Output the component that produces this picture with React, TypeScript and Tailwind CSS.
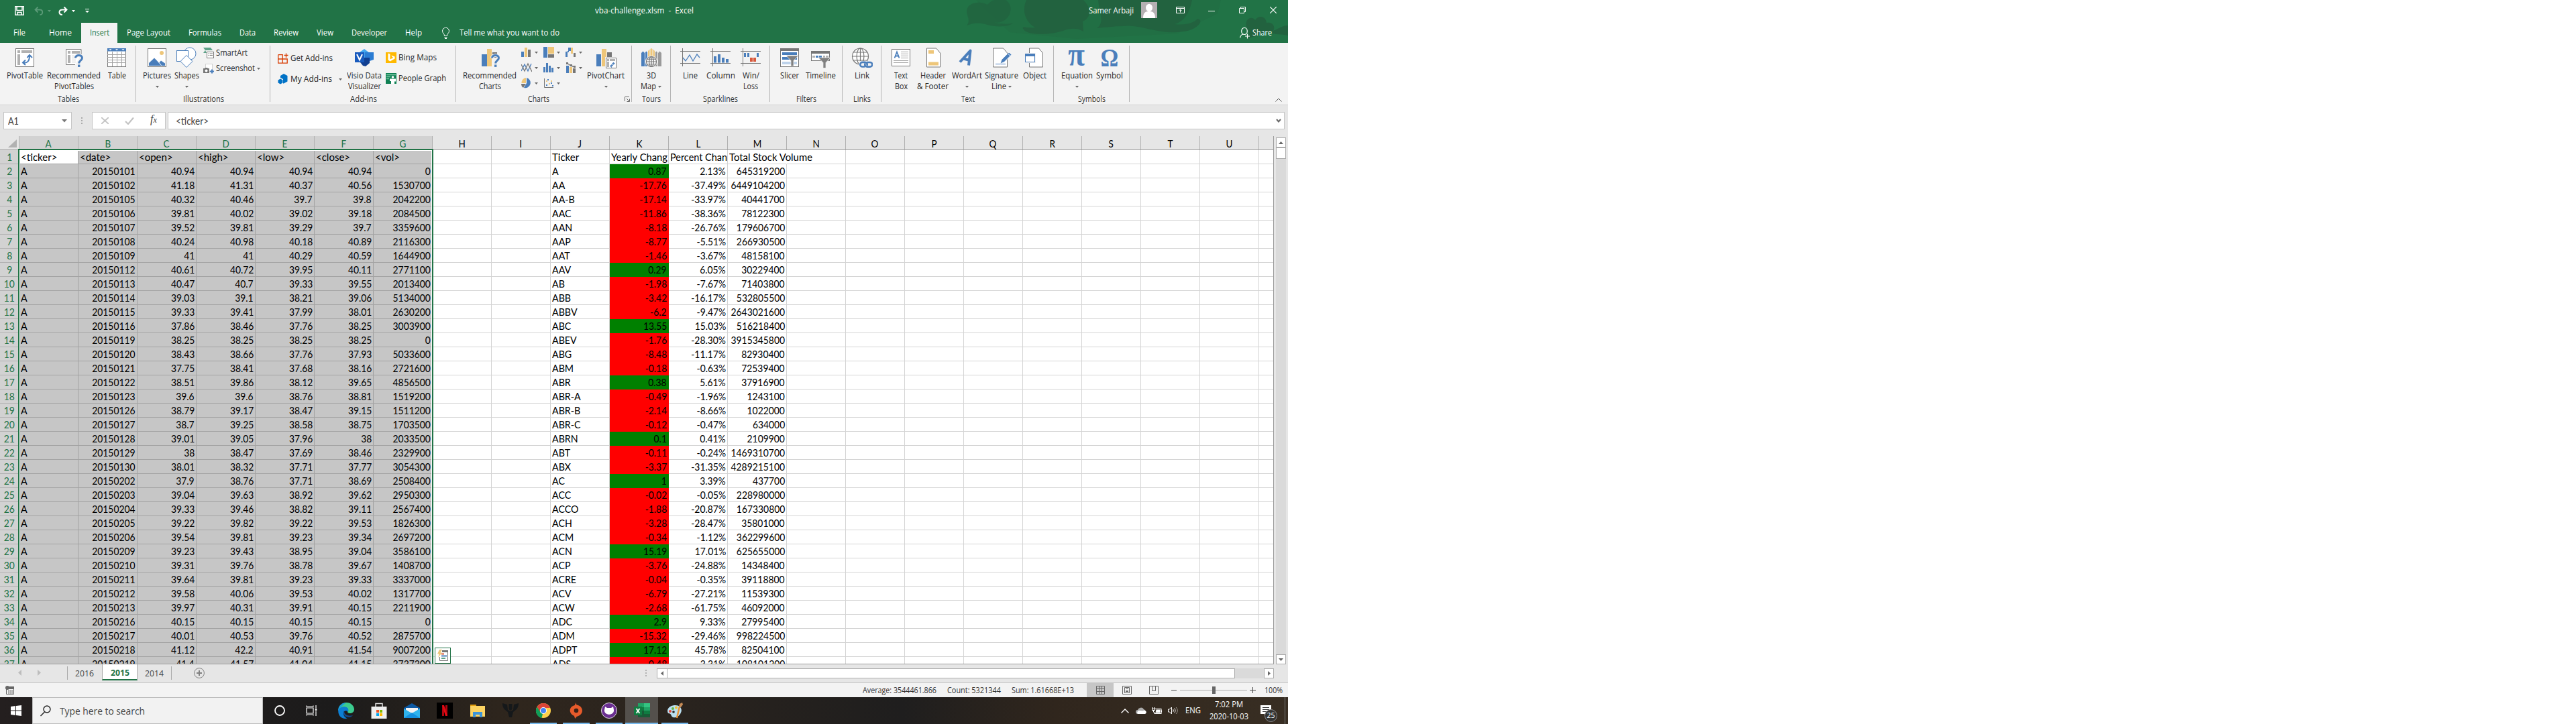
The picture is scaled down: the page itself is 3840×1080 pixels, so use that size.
import React, { useLayoutEffect, useRef } from 'react';

const BLUE = '#4a7ebb';
const GOLD = '#eec679';
const GREY = '#767676';

/* Text whose natural width is condensed or widened to fill the width of its box. */
function T({ className = '', children }: { className?: string; children: React.ReactNode }) {
  const outer = useRef<HTMLSpanElement>(null);
  const inner = useRef<HTMLSpanElement>(null);
  useLayoutEffect(() => {
    const fit = () => {
      const o = outer.current;
      const i = inner.current;
      if (!o || !i) return;
      i.style.transform = 'none';
      const w = i.getBoundingClientRect().width;
      if (w > 0) i.style.transform = `scaleX(${o.clientWidth / w})`;
    };
    fit();
    document.fonts?.ready.then(fit);
  }, []);
  return (
    <span ref={outer} className={`block shrink-0 whitespace-pre ${className}`}>
      <span ref={inner} className="inline-block origin-left">
        {children}
      </span>
    </span>
  );
}

function Down({ className = '' }: { className?: string }) {
  return (
    <svg className={`block shrink-0 ${className}`} width="5" height="3" viewBox="0 0 5 3">
      <path d="M0 0h5L2.5 3z" fill="currentColor" />
    </svg>
  );
}

function Svg({ size = 32, children }: { size?: number; children: React.ReactNode }) {
  return (
    <svg className="block shrink-0" width={size} height={size} viewBox={`0 0 ${size} ${size}`} fill="none">
      {children}
    </svg>
  );
}

/* ---------- large ribbon icons, 32 x 32 ---------- */

const PivotTableIcon = () => (
  <Svg>
    <rect x="2.5" y="2.5" width="27" height="27" fill="#fff" stroke={GREY} />
    <path d="M5 5h4v4H5zM11 5h16v4H11zM5 11h4v16H5z" fill="#b1b1b1" />
    <path d="M14 23.5c5 1 9-2 9-10M17 19.5l-4 4 4 3.5M19.5 16l3.5-4 4 4" stroke={BLUE} strokeWidth="2" />
  </Svg>
);

const Question = ({ x = 0, y = 0 }: { x?: number; y?: number }) => (
  <g transform={`translate(${x} ${y})`}>
    <path d="M1.5 6C1.5 0.500 11.500 0.500 11.500 6c0 3.500-4.500 4-4.500 8" stroke="#f3f3f3" strokeWidth="5" />
    <path d="M1.500 6C1.500 0.500 11.500 0.500 11.500 6c0 3.500-4.800 4-4.800 8" stroke={BLUE} strokeWidth="3" />
    <rect x="5" y="16" width="3.400" height="3.400" fill={BLUE} />
  </g>
);

const RecPivotIcon = () => (
  <Svg>
    <path d="M27 11V3.500H4.500v23H18" fill="#fff" stroke={GREY} />
    <path d="M7 6h4v4H7zM13 6h12v4H13zM7 12h4v12H7z" fill="#b1b1b1" />
    <path d="M13 13.500h8M13 16.500h6M13 19.500h6M13 22.500h6" stroke="#c8c8c8" />
    <Question x={17} y={10.500} />
  </Svg>
);

const TableIcon = () => (
  <Svg>
    <rect x="2.500" y="2.500" width="27" height="27" fill="#fff" stroke={GREY} />
    <rect x="2" y="2" width="28" height="4.500" fill={BLUE} />
    <path d="M4.500 3.300h4l-2 2zM14 3.300h4l-2 2zM23.500 3.300h4l-2 2z" fill="#fff" />
    <path d="M2 11.500h28M2 15.500h28M2 19.500h28M2 23.500h28M9.500 7v22M16.500 7v22M23.500 7v22" stroke="#a3a3a3" />
  </Svg>
);

const PicturesIcon = () => (
  <Svg>
    <rect x="2.500" y="2.500" width="27" height="27" fill="#fff" stroke={GREY} />
    <circle cx="23" cy="9" r="3" fill={GOLD} />
    <path d="M4 28v-4l8-7.500 7 7 3-3 6 4v3.500z" fill={BLUE} />
    <path d="M17 21l5.500 6.500" stroke="#fff" />
  </Svg>
);

const ShapesIcon = () => (
  <Svg>
    <circle cx="21" cy="10" r="9" fill="#fff" stroke={BLUE} />
    <rect x="1.500" y="5.500" width="17" height="16" fill="#fff" stroke={BLUE} />
    <path d="M16 12.500l9 9-9 9-9-9z" fill="#fff" stroke={BLUE} />
  </Svg>
);

const VisioIcon = () => (
  <Svg>
    <path d="M9 8l7-5 8 6v8H9z" fill="#41a5ee" />
    <path d="M17 8h13v11l-6 2-7-4z" fill="#2b7cd3" />
    <path d="M10 16h14v8l-6 5-4-1-4-5z" fill="#103f91" />
    <rect x="2" y="8" width="14" height="15" fill="#185abd" />
    <path d="M5 11l4 8.500 4-8.500" stroke="#fff" strokeWidth="2" />
  </Svg>
);

const RecChartsIcon = () => (
  <Svg>
    <rect x="4" y="11" width="8" height="18" fill={BLUE} />
    <rect x="12" y="3" width="7" height="26" fill={GOLD} />
    <rect x="20" y="8" width="7" height="8" fill={GREY} />
    <Question x={18} y={10.500} />
  </Svg>
);

const PivotChartIcon = () => (
  <Svg>
    <rect x="2" y="11" width="7" height="18" fill={BLUE} />
    <rect x="10" y="3" width="7" height="26" fill={GOLD} />
    <rect x="18" y="8" width="7" height="8" fill={GREY} />
    <rect x="15" y="15" width="17" height="17" fill="#f3f3f3" />
    <rect x="16.500" y="16.500" width="15" height="15" fill="#fff" stroke={GREY} />
    <path d="M18 18h3v3h-3zM22 18h8v3h-8zM18 22h3v8h-3z" fill="#b1b1b1" />
    <path d="M23 28.500c3 0 4.500-1 4.500-4.500M25 26.500l-2 2 2 2M25.500 25.500l2-2 2 2" stroke={BLUE} strokeWidth="1.200" />
  </Svg>
);

const Globe = ({ cx, cy, r }: { cx: number; cy: number; r: number }) => (
  <g stroke={GREY} strokeWidth="1.200">
    <circle cx={cx} cy={cy} r={r} fill="#fff" />
    <ellipse cx={cx} cy={cy} rx={r * 0.45} ry={r} />
    <path d={`M${cx - r} ${cy}h${2 * r}M${cx} ${cy - r}v${2 * r}M${cx - r * 0.85} ${cy - r * 0.5}h${r * 1.7}M${cx - r * 0.85} ${cy + r * 0.5}h${r * 1.7}`} />
  </g>
);

const MapIcon = () => (
  <Svg>
    <path d="M1 9l2.500-2.500L6 9v20H1zM7 8l1.500-1.500L10 8v21H7z" fill={BLUE} />
    <path d="M11 6l2.500-2.500v20H11zM14.500 3L16 2l1.500 1v20h-3zM18.500 3.500L21 6v17h-2.500z" fill={GOLD} />
    <path d="M22 8l1.500-1.500L25 8v21h-3zM26 9l2.500-2.500L31 9v20h-5z" fill="#9a9a9a" />
    <circle cx="16" cy="22" r="9" fill="#f3f3f3" />
    <Globe cx={16} cy={22} r={7.500} />
  </Svg>
);

const Axes = () => <path d="M1 6.500h30M1 24.500h30M4.500 2v27" stroke={GREY} />;

const LineIcon = () => (
  <Svg>
    <path d="M5 16l4 5 6-9 5 9 6-10 4 5" stroke={BLUE} strokeWidth="1.300" />
    <Axes />
  </Svg>
);

const ColumnIcon = () => (
  <Svg>
    <path d="M6 14h4v9.500H6zM12 11h4v12.500h-4zM18 16h4v7.500h-4zM24 18h4v5.500h-4z" fill={BLUE} />
    <Axes />
  </Svg>
);

const WinLossIcon = () => (
  <Svg>
    <path d="M6 9h3v6H6zM11 9h3v6h-3zM25 9h3v6h-3z" fill={BLUE} />
    <path d="M15 16h4v6h-4zM20 16h4v6h-4z" fill="#d8593c" />
    <Axes />
  </Svg>
);

const Funnel = ({ x = 0, y = 0 }: { x?: number; y?: number }) => (
  <path transform={`translate(${x} ${y})`} d="M0 0h18l-7 7.500v8H7v-8z" fill="#808080" stroke="#f3f3f3" strokeWidth=".7" />
);

const SlicerIcon = () => (
  <Svg>
    <rect x="2.500" y="2.500" width="27" height="27" fill="#fff" stroke={GREY} />
    <rect x="2" y="2" width="28" height="4" fill={GREY} />
    <path d="M5 8h22v4H5zM5 15h22v4H5z" fill={BLUE} />
    <path d="M5 22h22v4H5z" fill="#bdd2ea" />
    <Funnel x={11} y={13} />
  </Svg>
);

const TimelineIcon = () => (
  <Svg>
    <rect x="2.500" y="7.500" width="27" height="13" fill="#fff" stroke={GREY} />
    <rect x="2" y="6" width="28" height="4" fill={GREY} />
    <path d="M4 13h4v3H4zM20 13h3v3h-3zM24 13h4v3h-4z" fill="#b1b1b1" />
    <path d="M9 13h4v3H9zM14 13h4v3h-4z" fill={BLUE} />
    <Funnel x={13} y={16} />
  </Svg>
);

const LinkIcon = () => (
  <Svg>
    <Globe cx={13.500} cy={14} r={12} />
    <rect x="11" y="21" width="21" height="11" fill="#f3f3f3" />
    <path
      d="M20 29.500h-3.500a3.300 3.300 0 010-6.600h4c3 0 4 3 2.500 5M23 23h5a3.300 3.300 0 010 6.600h-4.500c-3 0-4-3-2.500-5"
      stroke={BLUE}
      strokeWidth="2.600"
    />
  </Svg>
);

const TextBoxIcon = () => (
  <Svg>
    <rect x="2.500" y="3.500" width="27" height="25" fill="#fff" stroke={GREY} />
    <path d="M16 7.500h11M16 10.500h11M16 13.500h11M16 16.500h11M5 20.500h22M5 23.500h22" stroke="#a3a3a3" />
    <path d="M6.500 16.500L10 7.500l3.500 9M8 13.500h4" stroke={BLUE} strokeWidth="1.800" />
  </Svg>
);

const Page = ({ x, w = 20 }: { x: number; w?: number }) => (
  <g transform={`translate(${x} 1.500)`}>
    <path d={`M.5.5h${w - 7}l6 7v21H.5z`} fill="#fff" stroke={GREY} />
    <path d={`M${w - 7}.5v7h6.500`} stroke={GREY} />
  </g>
);

const HeaderIcon = () => (
  <Svg>
    <Page x={6} w={21} />
    <path d="M9 5h8v5H9zM9 22.500h15v5H9z" fill={GOLD} />
  </Svg>
);

const WordArtIcon = () => (
  <Svg>
    <path d="M6 22.500L21.500 5.500l-2.500 22M11.500 17.500l9 2.500" stroke={BLUE} strokeWidth="4" strokeLinejoin="round" />
  </Svg>
);

const SignatureIcon = () => (
  <Svg>
    <Page x={3} w={22} />
    <path d="M7 25.500h15" stroke={BLUE} />
    <path d="M14 25l2-6L27 8l4 3.500L20 22.500z" fill={BLUE} stroke="#fff" strokeWidth=".8" />
    <path d="M25.500 10l3.500 3.500" stroke="#fff" />
  </Svg>
);

const ObjectIcon = () => (
  <Svg>
    <Page x={8} w={21} />
    <rect x="1" y="9" width="17" height="15" fill="#f3f3f3" />
    <rect x="2.500" y="10.500" width="14" height="12" fill="#fff" stroke={BLUE} />
    <rect x="2" y="10" width="15" height="4" fill={BLUE} />
  </Svg>
);

const GlyphIcon = ({ className, children }: { className: string; children: string }) => (
  <span className="flex h-8 w-8 shrink-0 items-center justify-center font-['Liberation_Serif'] font-bold text-[#4a7ebb]">
    <span className={`block shrink-0 leading-none ${className}`}>{children}</span>
  </span>
);

/* ---------- small ribbon icons, 16 x 16 ---------- */

const SmartArtIcon = () => (
  <Svg size={16}>
    <path d="M0 0h11l3 4H3l2 4H0l3-4z" fill="#5fa289" />
    <rect x="5.500" y="6.500" width="10" height="9" fill="#fff" stroke={GREY} />
    <path d="M7 9h1M7 11.500h1M9.500 9h4.500M9.500 11.500h4.500" stroke={GREY} />
  </Svg>
);
const ScreenshotIcon = () => (
  <Svg size={16}>
    <rect x="3.500" y="1.500" width="10" height="11" fill="#fff" stroke="#aaa" strokeDasharray="1 1" />
    <path d="M0 8h2l1-1h3l1 1h2v7H0z" fill={GREY} />
    <circle cx="4.500" cy="11.500" r="2" fill="#fff" />
    <path d="M13 9.500v6M10 12.500h6" stroke={BLUE} strokeWidth="2" />
  </Svg>
);
const GetAddinsIcon = () => (
  <Svg size={16}>
    <path d="M.7 2.700h6.500v12.500M.7 2.700v12.500h13.500V9H.7M12.500.5v6.500M9.500 3.500h6" stroke="#d83b01" strokeWidth="1.300" />
  </Svg>
);
const MyAddinsIcon = () => (
  <Svg size={16}>
    <path d="M9 0l5.500 3v8.500L9 14.500H8V8L4 6V3z" fill="#0072c6" />
    <path d="M4 7.500l3.500 2v4L4 15.500l-3.500-2v-4z" fill="#0072c6" />
  </Svg>
);
const BingIcon = () => (
  <Svg size={16}>
    <rect width="16" height="16" fill="#ffb900" />
    <path d="M3.500 1.500l3 1v8l5-2.500-2-1-1-2.500 5 2v3l-7 4-3-2z" fill="#fff" />
  </Svg>
);
const PeopleIcon = () => (
  <Svg size={16}>
    <rect width="16" height="16" fill="#0f8053" />
    <path d="M1 2.500h14M1 5.500h6M1 8.500h4" stroke="#7dc7a6" strokeWidth="1.500" />
    <circle cx="10.500" cy="6" r="1.800" fill="#fff" />
    <path d="M6 8.500h9v4h-2V16H8v-4H6z" fill="#fff" />
  </Svg>
);

const chartIcons: React.ReactNode[] = [
  <g key="0"><path d="M0 7h4v8H0z" fill={BLUE} /><path d="M5 1h4v14H5z" fill={GOLD} /><path d="M10 4h4v11h-4z" fill={GREY} /></g>,
  <g key="1"><path d="M0 0h6v16H0z" fill={BLUE} /><path d="M7 0h9v10H7z" fill={GOLD} /><path d="M7 11h9v5H7z" fill={GREY} /></g>,
  <g key="2"><path d="M0 7h3v8H0zM4 1h4v5H4zM3 6h2v2H3z" fill={BLUE} /><path d="M8 1h3v9H8z" fill={GOLD} /><path d="M12 9h3v6h-3z" fill={GREY} /></g>,
  <g key="3"><path d="M0 13L5 3l5 10 5-11" stroke={BLUE} strokeWidth="1.300" /><path d="M0 3l5 10 5-11 6 12" stroke={GREY} strokeWidth="1.300" /></g>,
  <path key="4" d="M0 7h3v8H0zM4 1h3v14H4zM8 5h3v10H8zM12 8h3v7h-3z" fill={BLUE} />,
  <g key="5"><path d="M1 5h4v11H1z" fill={BLUE} /><path d="M6 7h4v9H6z" fill={GOLD} /><path d="M11 9h4v7h-4z" fill={GREY} /><path d="M2 1l6 4 6 2" stroke={GREY} strokeWidth="1.400" /><path d="M1 0h3v3H1zM7 3h3v3H7zM12 5h3v3h-3z" fill={GREY} /></g>,
  <g key="6"><path d="M7 8V0a7.500 7.500 0 00-6.500 8z" fill={GOLD} /><path d="M0 9h7l-4 6a7 7 0 01-3-6z" fill={GREY} /><path d="M8 0a7.500 7.500 0 11-4 15l4-7z" fill={BLUE} /></g>,
  <g key="7"><path d="M1.500 1v13.500H15" stroke={GREY} /><path d="M4 4h2v2H4zM8 8h2v2H8zM11 4h2v2h-2z" fill={GOLD} /><path d="M6 2h2v2H6zM11 7h2v2h-2zM13 11h2v2h-2zM4 10h2v2H4z" fill={BLUE} /></g>,
];

/* ---------- ribbon ---------- */

type BigProps = {
  className: string;
  icon: React.ReactNode;
  l1: string;
  w1: string;
  l2?: string;
  w2?: string;
  arrow?: boolean;
};

function Big({ className, icon, l1, w1, l2, w2 = '', arrow }: BigProps) {
  return (
    <div className={`flex shrink-0 flex-col items-center pt-1.5 ${className}`}>
      {icon}
      <div className="mt-[3px] flex h-4 items-center justify-center">
        <T className={w1}>{l1}</T>
      </div>
      <div className="flex h-4 items-center justify-center gap-[3px]">
        {l2 && <T className={w2}>{l2}</T>}
        {arrow && <Down className="text-[#666]" />}
      </div>
    </div>
  );
}

function Group({ className, label, lw, launcher, children }: { className: string; label: string; lw: string; launcher?: boolean; children: React.ReactNode }) {
  return (
    <div className={`relative flex shrink-0 flex-col ${className}`}>
      <div className="flex h-[76px]">{children}</div>
      <div className={`flex h-4 items-center justify-center text-[#333] ${launcher ? 'pr-4' : ''}`}>
        <T className={lw}>{label}</T>
      </div>
      {launcher && (
        <svg className="absolute right-[3px] bottom-1" width="8" height="8" viewBox="0 0 8 8" fill="none" stroke="#666">
          <path d="M.5 7V.5H7M3 3l4 4M7.500 3.500v4h-4" />
        </svg>
      )}
      <div className="absolute top-1 right-0 h-[84px] w-px bg-[#b5b5b5]" />
    </div>
  );
}

function Small({ icon, text, w, arrow, className = '' }: { icon: React.ReactNode; text: string; w: string; arrow?: string; className?: string }) {
  return (
    <div className={`flex h-4 items-center ${className}`}>
      {icon}
      <T className={`ml-[3px] ${w}`}>{text}</T>
      {arrow && <Down className={`text-[#666] ${arrow}`} />}
    </div>
  );
}

function Ribbon() {
  return (
    <div className="flex h-[93px] border-b border-[#d2d2d2] bg-[#f3f3f3] text-xs leading-4 text-[#262626]">
      <Group className="w-[203px]" label="Tables" lw="w-[32px]">
        <Big className="ml-1.5 w-[62px]" icon={<PivotTableIcon />} l1="PivotTable" w1="w-[54px]" />
        <Big className="w-[84px]" icon={<RecPivotIcon />} l1="Recommended" w1="w-[80px]" l2="PivotTables" w2="w-[59px]" />
        <Big className="w-[44px]" icon={<TableIcon />} l1="Table" w1="w-[27px]" />
      </Group>
      <Group className="w-[200px]" label="Illustrations" lw="w-[61px]">
        <Big className="ml-[9px] w-[44px]" icon={<PicturesIcon />} l1="Pictures" w1="w-[42px]" arrow />
        <Big className="w-[44px]" icon={<ShapesIcon />} l1="Shapes" w1="w-[37px]" arrow />
        <div className="ml-[3px] flex flex-col gap-[7px] pt-[7px]">
          <Small icon={<SmartArtIcon />} text="SmartArt" w="w-[47px]" />
          <Small icon={<ScreenshotIcon />} text="Screenshot" w="w-[58px]" arrow="ml-[3px]" />
        </div>
      </Group>
      <Group className="w-[277px]" label="Add-ins" lw="w-[40px]">
        <div className="ml-[11px] flex w-[101px] flex-col gap-[15px] pt-[15px]">
          <Small icon={<GetAddinsIcon />} text="Get Add-ins" w="w-[63px]" />
          <Small icon={<MyAddinsIcon />} text="My Add-ins" w="w-[62px]" arrow="ml-[10px]" />
        </div>
        <Big className="w-[56px]" icon={<VisioIcon />} l1="Visio Data" w1="w-[52px]" l2="Visualizer" w2="w-[49px]" />
        <div className="ml-1 flex flex-col gap-[15px] pt-3.5">
          <Small icon={<BingIcon />} text="Bing Maps" w="w-[57px]" />
          <Small icon={<PeopleIcon />} text="People Graph" w="w-[71px]" />
        </div>
      </Group>
      <Group className="w-[262px]" label="Charts" lw="w-[32px]" launcher>
        <Big className="ml-2 w-[84px]" icon={<RecChartsIcon />} l1="Recommended" w1="w-[80px]" l2="Charts" w2="w-[33px]" />
        <div className="ml-[5px] grid h-fit w-[99px] grid-cols-3 gap-y-[7px] pt-1.5">
          {chartIcons.map((ic, i) => (
            <div key={i} className="flex items-center gap-1">
              <Svg size={16}>{ic}</Svg>
              <Down className="text-[#666]" />
            </div>
          ))}
        </div>
        <Big className="-ml-px w-[56px]" icon={<PivotChartIcon />} l1="PivotChart" w1="w-[56px]" arrow />
      </Group>
      <Group className="w-[58px]" label="Tours" lw="w-[28px]">
        <Big className="w-[57px]" icon={<MapIcon />} l1="3D" w1="w-[14px]" l2="Map" w2="w-[23px]" arrow />
      </Group>
      <Group className="w-[148px]" label="Sparklines" lw="w-[52px]">
        <Big className="ml-[7px] w-[44px]" icon={<LineIcon />} l1="Line" w1="w-[22px]" />
        <Big className="w-[46px]" icon={<ColumnIcon />} l1="Column" w1="w-[43px]" />
        <Big className="w-[44px]" icon={<WinLossIcon />} l1="Win/" w1="w-[25px]" l2="Loss" w2="w-[22px]" />
      </Group>
      <Group className="w-[108px]" label="Filters" lw="w-[30px]">
        <Big className="ml-[6px] w-[46px]" icon={<SlicerIcon />} l1="Slicer" w1="w-[28px]" />
        <Big className="w-[46px]" icon={<TimelineIcon />} l1="Timeline" w1="w-[45px]" />
      </Group>
      <Group className="w-[58px]" label="Links" lw="w-[26px]">
        <Big className="w-[58px]" icon={<LinkIcon />} l1="Link" w1="w-[22px]" />
      </Group>
      <Group className="w-[257px]" label="Text" lw="w-[20px]">
        <Big className="ml-[7px] w-[44px]" icon={<TextBoxIcon />} l1="Text" w1="w-[20px]" l2="Box" w2="w-[19px]" />
        <Big className="w-[51px]" icon={<HeaderIcon />} l1="Header" w1="w-[38px]" l2="& Footer" w2="w-[47px]" />
        <Big className="w-[50px]" icon={<WordArtIcon />} l1="WordArt" w1="w-[45px]" arrow />
        <Big className="w-[54px]" icon={<SignatureIcon />} l1="Signature" w1="w-[50px]" l2="Line" w2="w-[22px]" arrow />
        <Big className="w-[44px]" icon={<ObjectIcon />} l1="Object" w1="w-[35px]" />
      </Group>
      <Group className="w-[113px]" label="Symbols" lw="w-[41px]">
        <Big className="ml-[9px] w-[50px]" icon={<GlyphIcon className="-translate-y-[5px] scale-x-90 text-[50px]">π</GlyphIcon>} l1="Equation" w1="w-[47px]" arrow />
        <Big className="w-[47px]" icon={<GlyphIcon className="scale-x-90 text-[37px]">Ω</GlyphIcon>} l1="Symbol" w1="w-[40px]" />
      </Group>
      <div className="flex flex-1 items-end justify-end pr-[9px] pb-1">
        <svg width="10" height="6" viewBox="0 0 10 6" fill="none" stroke="#555">
          <path d="M.5 5.500L5 1l4.500 4.500" />
        </svg>
      </div>
    </div>
  );
}

/* ---------- title bar and tabs ---------- */

const tabs = [
  { t: 'File', c: 'ml-[20px] w-[18px]' },
  { t: 'Home', c: 'ml-[35px] w-[34px]' },
  { t: 'Insert', c: 'w-[29px]', active: true },
  { t: 'Page Layout', c: 'ml-[14px] w-[65px]' },
  { t: 'Formulas', c: 'ml-[27px] w-[49px]' },
  { t: 'Data', c: 'ml-[27px] w-[24px]' },
  { t: 'Review', c: 'ml-[27px] w-[37px]' },
  { t: 'View', c: 'ml-[27px] w-[25px]' },
  { t: 'Developer', c: 'ml-[27px] w-[53px]' },
  { t: 'Help', c: 'ml-[27px] w-[25px]' },
];

function Header() {
  return (
    <div className="relative h-16 bg-[#217346] text-xs leading-4 text-white">
      <svg className="absolute top-0 right-0" width="500" height="64" viewBox="0 0 500 64" fill="#22623f">
        <path d="M35 0H400l-5 20-60 30-150 8-100-10z" opacity=".25" />
        <path d="M21 18C20 4 40 0 52 7c6-6 8-7 12-7h15c12 8 8 22 1 28-5 5-14 7-20 5 12 3 24 4 30 1-4 6-25 7-38 3-10-3-18-4-31 1 6-7 1-13 0-20z" opacity=".75" />
        <path d="M110 0h85c12 12 12 26-1 32l1 15c-10-6-17-4-25-3-25 10-60 8-64 0-3-3 0-5 4-3 5 0 9 1 13 0C108 32 103 16 110 0z" />
        <path d="M217 0h140c-4 20-12 32-26 36 14 2 28-1 34-8 12 2-2 18-22 19-32 6-66-12-88-8-15 0-28 2-40 3 12-8 4-22 2-42z" />
        <path d="M438 40c-3-12 8-17 13-10 5-8 16-6 17 4 12-2 14 10 8 14 0 4 10 2 24 5v-15c-10 0-18 8-24 8l-38 12c6-6 3-12 0-18z" />
      </svg>
      <div className="relative flex h-8 items-center">
        <svg className="ml-[22px]" width="14" height="14" viewBox="0 0 14 14" fill="none" stroke="#fff" strokeWidth="1.500">
          <path d="M.8.800h12.400v12.400H.8zM3 1v5.500h8V1M4 13V9.500h6V13" />
        </svg>
        <svg className="ml-[15px] text-[#5b9a78]" width="14" height="13" viewBox="0 0 14 13" fill="none" stroke="currentColor" strokeWidth="1.800">
          <path d="M5.500.5L1.500 4.500l4 4M2 4.500h6.500c5 0 5 7.500 0 7.500" />
        </svg>
        <Down className="ml-[6px] text-[#5b9a78]" />
        <svg className="ml-[11px]" width="14" height="13" viewBox="0 0 14 13" fill="none" stroke="#fff" strokeWidth="2">
          <path d="M8.500.5l4 4-4 4M12 4.500H6c-6 0-6 7.500 0 7.500" />
        </svg>
        <Down className="ml-[6px]" />
        <svg className="ml-[15px]" width="6" height="6" viewBox="0 0 6 6">
          <path d="M0 0h6v1H0zM0 3h6L3 6z" fill="#fff" />
        </svg>
        <T className="ml-[754px] w-[147px]">{'vba-challenge.xlsm  -  Excel'}</T>
        <T className="ml-[589px] w-[67px]">Samer Arbaji</T>
        <svg className="-mt-0.5 ml-[11px]" width="24" height="24" viewBox="0 0 24 24">
          <rect width="24" height="24" fill="#b4b0b2" />
          <ellipse cx="12" cy="8.500" rx="5" ry="5.800" fill="#fff" />
          <path d="M3 24c0-9 4-10 9-10s9 1 9 10z" fill="#fff" />
        </svg>
        <svg className="-mt-0.5 ml-[28px]" width="13" height="10" viewBox="0 0 13 10" fill="none" stroke="#fff">
          <path d="M.5.500h12v9H.5zM1 2.500h11M6.500 8.500V4M4.500 6l2-2 2 2" />
        </svg>
        <div className="ml-[35px] h-px w-[10px] bg-white" />
        <svg className="-mt-0.5 ml-[36px]" width="10" height="10" viewBox="0 0 10 10" fill="none" stroke="#fff">
          <path d="M.5 2.500h7v7h-7zM2.500 2V.5h7v7H8" />
        </svg>
        <svg className="-mt-0.5 ml-[36px]" width="10" height="10" viewBox="0 0 10 10" fill="none" stroke="#fff" strokeWidth="1.200">
          <path d="M0 0l10 10M10 0L0 10" />
        </svg>
      </div>
      <div className="relative flex h-8 items-end">
        {tabs.map((tab) =>
          tab.active ? (
            <div key={tab.t} className="ml-[14px] flex h-[30px] w-[54px] items-center justify-center bg-[#f3f3f3] text-[#217346]">
              <T className={tab.c}>{tab.t}</T>
            </div>
          ) : (
            <div key={tab.t} className="flex h-[30px] items-center">
              <T className={tab.c}>{tab.t}</T>
            </div>
          ),
        )}
        <div className="flex h-[30px] items-center">
          <svg className="ml-[30px]" width="11" height="17" viewBox="0 0 11 17" fill="none" stroke="#fff">
            <path d="M3.500 12.500C3.500 9 .5 8.500.5 5.300a5 5 0 0110 0c0 3.200-3 3.700-3 7.200zM3.500 14.500h4M4 16.500h3" />
          </svg>
          <T className="ml-[15px] w-[149px]">Tell me what you want to do</T>
          <svg className="ml-[1014px]" width="15" height="17" viewBox="0 0 15 17" fill="none" stroke="#fff" strokeWidth="1.200">
            <ellipse cx="7" cy="5.500" rx="4.300" ry="5" />
            <path d="M.6 15.500c.5-3 2-5 4.400-5.500M11.500 9.500v7M8 13h7" />
          </svg>
          <T className="ml-1 w-[29px]">Share</T>
        </div>
      </div>
    </div>
  );
}

/* ---------- formula bar ---------- */

function FormulaBar() {
  return (
    <div className="flex h-[46px] items-start bg-[#e6e6e6] pt-[10px] pl-[5px] text-[#444]">
      <div className="flex h-[26px] w-[102px] items-center border border-[#c6c6c6] bg-white pl-1.5 font-['Lato'] text-[15px]">
        <T className="w-[16px]">A1</T>
        <svg className="ml-[64px]" width="8" height="5" viewBox="0 0 8 5">
          <path d="M0 0h8L4 4.500z" fill="#777" />
        </svg>
      </div>
      <div className="flex h-[26px] w-[30px] flex-col items-center justify-center gap-[2px]">
        <i className="block size-[2px] bg-[#aaa]" />
        <i className="block size-[2px] bg-[#aaa]" />
        <i className="block size-[2px] bg-[#aaa]" />
      </div>
      <div className="flex h-[26px] w-[110px] items-center border border-[#c6c6c6] bg-white">
        <svg className="ml-[13px]" width="11" height="10" viewBox="0 0 11 10" stroke="#c3c3c3" strokeWidth="1.800">
          <path d="M0 0l11 10M11 0L0 10" />
        </svg>
        <svg className="ml-[24px]" width="14" height="11" viewBox="0 0 14 11" fill="none" stroke="#c3c3c3" strokeWidth="2.200">
          <path d="M1 6l4 4 8-9.500" />
        </svg>
        <span className="-mt-1 ml-[24px] font-['Liberation_Serif'] text-[16px] leading-none text-[#444] italic">
          f<span className="text-[12px]">x</span>
        </span>
      </div>
      <div className="ml-[3px] flex h-[26px] w-[1665px] items-center justify-between border border-[#c6c6c6] bg-white pr-1 pl-[11px] font-['Lato'] text-[15px]">
        <T className="w-[49px]">&lt;ticker&gt;</T>
        <svg width="8" height="6" viewBox="0 0 8 6" fill="none" stroke="#666" strokeWidth="2">
          <path d="M1 1l3 3.500L7 1" />
        </svg>
      </div>
    </div>
  );
}

/* ---------- sheet ---------- */

const columns = 'ABCDEFGHIJKLMNOPQRSTU'.split('');

const sheet = `<ticker>|<date>|<open>|<high>|<low>|<close>|<vol>|Ticker|Yearly Chang|Percent Chan|Total Stock Volume
A|20150101|40.94|40.94|40.94|40.94|0|A|0.87|2.13%|645319200
A|20150102|41.18|41.31|40.37|40.56|1530700|AA|-17.76|-37.49%|6449104200
A|20150105|40.32|40.46|39.7|39.8|2042200|AA-B|-17.14|-33.97%|40441700
A|20150106|39.81|40.02|39.02|39.18|2084500|AAC|-11.86|-38.36%|78122300
A|20150107|39.52|39.81|39.29|39.7|3359600|AAN|-8.18|-26.76%|179606700
A|20150108|40.24|40.98|40.18|40.89|2116300|AAP|-8.77|-5.51%|266930500
A|20150109|41|41|40.29|40.59|1644900|AAT|-1.46|-3.67%|48158100
A|20150112|40.61|40.72|39.95|40.11|2771100|AAV|0.29|6.05%|30229400
A|20150113|40.47|40.7|39.33|39.55|2013400|AB|-1.98|-7.67%|71403800
A|20150114|39.03|39.1|38.21|39.06|5134000|ABB|-3.42|-16.17%|532805500
A|20150115|39.33|39.41|37.99|38.01|2630200|ABBV|-6.2|-9.47%|2643021600
A|20150116|37.86|38.46|37.76|38.25|3003900|ABC|13.55|15.03%|516218400
A|20150119|38.25|38.25|38.25|38.25|0|ABEV|-1.76|-28.30%|3915345800
A|20150120|38.43|38.66|37.76|37.93|5033600|ABG|-8.48|-11.17%|82930400
A|20150121|37.75|38.41|37.68|38.16|2721600|ABM|-0.18|-0.63%|72539400
A|20150122|38.51|39.86|38.12|39.65|4856500|ABR|0.38|5.61%|37916900
A|20150123|39.6|39.6|38.76|38.81|1519200|ABR-A|-0.49|-1.96%|1243100
A|20150126|38.79|39.17|38.47|39.15|1511200|ABR-B|-2.14|-8.66%|1022000
A|20150127|38.7|39.25|38.58|38.75|1703500|ABR-C|-0.12|-0.47%|634000
A|20150128|39.01|39.05|37.96|38|2033500|ABRN|0.1|0.41%|2109900
A|20150129|38|38.47|37.69|38.46|2329900|ABT|-0.11|-0.24%|1469310700
A|20150130|38.01|38.32|37.71|37.77|3054300|ABX|-3.37|-31.35%|4289215100
A|20150202|37.9|38.76|37.71|38.69|2508400|AC|1|3.39%|437700
A|20150203|39.04|39.63|38.92|39.62|2950300|ACC|-0.02|-0.05%|228980000
A|20150204|39.33|39.46|38.82|39.11|2567400|ACCO|-1.88|-20.87%|167330800
A|20150205|39.22|39.82|39.22|39.53|1826300|ACH|-3.28|-28.47%|35801000
A|20150206|39.54|39.81|39.23|39.34|2697200|ACM|-0.34|-1.12%|362299600
A|20150209|39.23|39.43|38.95|39.04|3586100|ACN|15.19|17.01%|625655000
A|20150210|39.31|39.76|38.78|39.67|1408700|ACP|-3.76|-24.88%|14348400
A|20150211|39.64|39.81|39.23|39.33|3337000|ACRE|-0.04|-0.35%|39118800
A|20150212|39.58|40.06|39.53|40.02|1317700|ACV|-6.79|-27.21%|11539300
A|20150213|39.97|40.31|39.91|40.15|2211900|ACW|-2.68|-61.75%|46092000
A|20150216|40.15|40.15|40.15|40.15|0|ADC|2.9|9.33%|27995400
A|20150217|40.01|40.53|39.76|40.52|2875700|ADM|-15.32|-29.46%|998224500
A|20150218|41.12|42.2|40.91|41.54|9007200|ADPT|17.12|45.78%|82504100
A|20150219|41.4|41.57|41.04|41.15|3737300|ADS|-0.48|-3.31%|108101200`
  .split('\n')
  .map((line) => {
    const c = line.split('|');
    return [...c.slice(0, 7), '', '', ...c.slice(7)];
  });

const isNumber = (r: number, c: number) => r > 0 && c !== 0 && c !== 9;

function cellClass(r: number, c: number, v: string) {
  const out = ['flex h-[21px] w-[88px] shrink-0 border-r border-b px-[2px] whitespace-nowrap'];
  if (c < 7) {
    out.push(r === 0 && c === 0 ? 'bg-white border-[#a3a3a3]' : 'bg-[#c6c6c6] border-[#a3a3a3]');
  } else if (c === 10 && r > 0) {
    out.push(v.startsWith('-') ? 'bg-[#ff0000] border-[#ff0000]' : 'bg-[#008000] border-[#008000]');
  } else if (r === 0 && c === 12) {
    out.push('border-b-[#d4d4d4] border-r-transparent');
  } else {
    out.push('border-[#d4d4d4]');
  }
  out.push(isNumber(r, c) ? 'justify-end' : 'justify-start');
  return out.join(' ');
}

function Cell({ r, c, v }: { r: number; c: number; v: string }) {
  let text: React.ReactNode = v;
  if (v && isNumber(r, c)) text = <span className="block shrink-0 origin-right scale-x-[0.925]">{v}</span>;
  else if (v && r > 0) text = <span className="block shrink-0 origin-left scale-x-[0.95]">{v}</span>;
  else if (c === 10) text = <T className="w-[84px]">{v}</T>;
  else if (c === 11) text = <T className="w-[85px]">{v}</T>;
  else if (c === 12) text = <T className="relative w-[124px]">{v}</T>;
  return <div className={cellClass(r, c, v)}>{text}</div>;
}

function Sheet() {
  return (
    <div className="flex h-[788px] bg-[#e6e6e6] font-['Lato'] text-[15px] leading-[21px] text-black">
      <div className="relative h-[788px] w-[1899px] overflow-hidden border-r border-b border-[#9b9b9b]">
        <div className="flex h-[21px] border-b border-[#9b9b9b]">
          <div className="flex w-[29px] items-end justify-end border-r border-[#b1b1b1] pr-[3px] pb-[3px]">
            <svg width="13" height="12" viewBox="0 0 13 12">
              <path d="M13 0v12H0z" fill="#b1b1b1" />
            </svg>
          </div>
          {columns.map((c, i) => (
            <div
              key={c}
              className={`w-[88px] shrink-0 border-r border-[#b1b1b1] text-center leading-[22px] ${i < 7 ? 'bg-[#d2d2d2] text-[#217346]' : ''}`}
            >
              <span className="inline-block scale-x-90">{c}</span>
            </div>
          ))}
        </div>
        {sheet.map((row, r) => (
          <div key={r} className="flex h-[21px] bg-white">
            <div className="h-[21px] w-[29px] shrink-0 border-r border-b border-[#b1b1b1] bg-[#d2d2d2] text-center text-[#217346]">
              <span className="inline-block scale-x-[0.925]">{r + 1}</span>
            </div>
            {columns.map((_, c) => (
              <Cell key={c} r={r} c={c} v={row[c] ?? ''} />
            ))}
            <div className="h-[21px] flex-1 border-b border-[#d4d4d4]" />
          </div>
        ))}
        <div className="absolute top-[19px] left-[27px] h-[900px] w-[619px] border-2 border-[#217346]" />
        <div className="absolute top-[21px] left-[29px] h-[900px] w-[615px] border border-white" />
        <div className="absolute top-[763px] left-[648px] flex h-[24px] w-[24px] items-center justify-center border border-[#217346] bg-white">
          <svg width="18" height="18" viewBox="0 0 18 18" fill="none">
            <path d="M4.500 11v5.500h12V2.500H8" stroke={GREY} />
            <path d="M8 1h9v3H8z" fill={GREY} />
            <path d="M7 6.500h4" stroke="#d8593c" strokeWidth="2" />
            <path d="M7 9.500h8" stroke={BLUE} strokeWidth="2" />
            <path d="M7 13h6" stroke="#5fa289" strokeWidth="2" />
            <path d="M4 0h4L5.500 4.500H8L2 12l1.500-5.500H1z" fill={GOLD} />
          </svg>
        </div>
      </div>
      <div className="ml-[3px] flex w-[15px] flex-col pt-[2px]">
        <div className="flex h-[15px] items-center justify-center border border-[#ababab] bg-white text-[#666]">
          <svg width="7" height="4" viewBox="0 0 7 4"><path d="M0 4h7L3.500 0z" fill="currentColor" /></svg>
        </div>
        <div className="h-[17px] border border-[#ababab] bg-white" />
        <div className="flex-1 bg-[#dadada]" />
        <div className="flex h-[15px] items-center justify-center border border-[#ababab] bg-white text-[#666]">
          <svg width="7" height="4" viewBox="0 0 7 4"><path d="M0 0h7L3.500 4z" fill="currentColor" /></svg>
        </div>
      </div>
    </div>
  );
}

function SheetTabs() {
  return (
    <div className="flex h-[28px] border-b border-[#c6c6c6] bg-[#e6e6e6] text-[13px] leading-[24px] text-[#444]">
      <svg className="mt-2 ml-[27px]" width="5" height="9" viewBox="0 0 5 9"><path d="M5 0v9L0 4.500z" fill="#bdbdbd" /></svg>
      <svg className="mt-2 ml-[24px]" width="5" height="9" viewBox="0 0 5 9"><path d="M0 0v9l5-4.500z" fill="#bdbdbd" /></svg>
      <div className="mt-[3px] ml-[39px] h-5 w-px bg-[#ababab]" />
      <T className="mt-px ml-[11px] w-[28px]">2016</T>
      <div className="ml-[12px] flex h-[24px] w-[53px] justify-center border-x border-b-2 border-x-[#ababab] border-b-[#217346] bg-white font-bold text-[#217346]">
        <T className="w-[28px]">2015</T>
      </div>
      <T className="mt-px ml-[11px] w-[28px]">2014</T>
      <div className="mt-[3px] ml-[11px] h-5 w-px bg-[#ababab]" />
      <svg className="mt-[5px] ml-[33px]" width="16" height="16" viewBox="0 0 16 16" fill="none" stroke="#808080">
        <circle cx="8" cy="8" r="7.400" />
        <path d="M8 4v8M4 8h8" strokeWidth="2" />
      </svg>
      <div className="mt-2 ml-[657px] flex flex-col gap-[2px]">
        <i className="block size-[2px] bg-[#b1b1b1]" />
        <i className="block size-[2px] bg-[#b1b1b1]" />
        <i className="block size-[2px] bg-[#b1b1b1]" />
      </div>
      <div className="ml-[15px] flex h-[15px] w-[920px] self-center bg-[#dadada]">
        <div className="flex w-[16px] items-center justify-center border border-[#ababab] bg-white">
          <svg width="4" height="7" viewBox="0 0 4 7"><path d="M4 0v7L0 3.500z" fill="#666" /></svg>
        </div>
        <div className="w-[846px] border border-l-0 border-[#ababab] bg-white" />
        <div className="ml-auto flex w-[15px] items-center justify-center border border-[#ababab] bg-white">
          <svg width="4" height="7" viewBox="0 0 4 7"><path d="M0 0v7l4-3.500z" fill="#666" /></svg>
        </div>
      </div>
    </div>
  );
}

function StatusBar() {
  return (
    <div className="flex h-[21px] items-center bg-[#f3f3f3] text-xs leading-4 text-[#333]">
      <svg className="ml-[8px]" width="13" height="13" viewBox="0 0 13 13">
        <path d="M5 1h8v4H5z" fill="#666" />
        <path d="M1.500 5v7.500h11V1" fill="none" stroke="#666" />
        <path d="M4 7h7M4 9h7M4 11h7" stroke="#666" strokeDasharray="2 .6" />
        <circle cx="3" cy="3" r="3" fill="#666" />
      </svg>
      <T className="ml-[1265px] w-[110px]">Average: 3544461.866</T>
      <T className="ml-[16px] w-[80px]">Count: 5321344</T>
      <T className="ml-[16px] w-[93px]">Sum: 1.61668E+13</T>
      <div className="ml-[19px] flex h-[21px] w-[40px] items-center justify-center bg-[#c6c6c6]">
        <svg width="13" height="13" viewBox="0 0 13 13" fill="none" stroke="#666">
          <path d="M.5.500h12v12H.5zM4.500 0v13M8.500 0v13M0 4.500h13M0 8.500h13" />
        </svg>
      </div>
      <svg className="ml-[13px]" width="14" height="13" viewBox="0 0 14 13" fill="none" stroke="#666">
        <path d="M.5.500h13v12H.5zM3.500 2.500h7v8h-7zM5 4.500h4M5 6.500h4M5 8.500h4" />
      </svg>
      <svg className="ml-[26px]" width="14" height="13" viewBox="0 0 14 13" fill="none" stroke="#666">
        <path d="M.5.500h13v12H.5zM4.500 0v7.500h5V0" />
      </svg>
      <div className="ml-[19px] h-px w-[8px] bg-[#444]" />
      <div className="ml-[5px] flex h-3 w-[100px] items-center">
        <div className="h-px w-12 bg-[#ababab]" />
        <div className="h-[11px] w-[5px] bg-[#666]" />
        <div className="h-px flex-1 bg-[#ababab]" />
      </div>
      <svg className="ml-[4px]" width="9" height="9" viewBox="0 0 9 9" stroke="#444"><path d="M4.500 0v9M0 4.500h9" /></svg>
      <T className="ml-[13px] w-[27px]">100%</T>
    </div>
  );
}

/* ---------- taskbar ---------- */

function App24({ open, active, children }: { open?: boolean; active?: boolean; children: React.ReactNode }) {
  return (
    <div className={`relative flex h-10 w-[49px] items-center justify-center ${active ? 'bg-[#54504c]' : ''}`}>
      <svg width="24" height="24" viewBox="0 0 24 24" fill="none">
        {children}
      </svg>
      {open && <div className={`absolute bottom-0 h-[2px] bg-[#76b9ed] ${active ? 'w-[49px]' : 'w-10'}`} />}
    </div>
  );
}

function Taskbar() {
  return (
    <div className="flex h-10 items-center bg-[linear-gradient(90deg,#241f1f_0%,#1c1b1b_26%,#2f261d_40%,#2b241e_50%,#1f1e1e_70%,#30261d_82%,#382e23_100%)] text-white">
      <svg className="ml-[16px]" width="16" height="16" viewBox="0 0 16 16" fill="#fff">
        <path d="M0 2l7-1v6.500H0zM8 .900L16 0v7.500H8zM0 8.500h7V15l-7-1zM8 8.500h8V16l-8-1z" />
      </svg>
      <div className="ml-[16px] flex h-10 w-[344px] items-center border border-[#bcbcbc] bg-[#f2f2f2] text-[15px] leading-5 text-[#444]">
        <svg className="ml-[11px]" width="16" height="17" viewBox="0 0 16 17" fill="none" stroke="#222" strokeWidth="1.400">
          <circle cx="10" cy="6" r="5" />
          <path d="M6.500 10L.5 16" />
        </svg>
        <T className="ml-[13px] w-[127px]">Type here to search</T>
      </div>
      <App24><circle cx="12" cy="12" r="7" stroke="#fff" strokeWidth="1.800" /></App24>
      <div className="-ml-px flex">
        <App24>
          <path d="M4 8h10v8H4zM4 4.500V6h10V4.500M4 19.500V18h10v1.500M18 4v5M18 13v7" stroke="#fff" strokeWidth="1.200" />
          <path d="M16.800 9.500h2.500v2.500h-2.500z" fill="#fff" />
        </App24>
      </div>
      <div className="ml-[2px] flex">
        <App24>
          <path d="M.5 11C2 4 7 0 12.500 0 19 0 24 5 24 10c0 4-3 6-6.500 6-3 0-4-1.500-3-3 1.500-3-1-6-5-6-4.500 0-8 2-9 4z" fill="#3ccb8f" />
          <path d="M0 13C0 6 3 1 12 0 7 4 3 7 0 13z" fill="#1ba0d8" />
          <path d="M.5 11C3 6 10 5 14 8c2 2 1.500 5 .5 6-2-3-7-2-6.500 3 .3 3 3 6 6 6.500C6 26-1 19 .500 11z" fill="#0c7fd4" />
          <path d="M9 12c-3 5 1 10 7 10 3 0 5-2 6-3-3 1-13 2-13-7z" fill="#114a8b" />
        </App24>
        <App24>
          <path d="M7 6V1.500h10V6" stroke="#ddd" strokeWidth="1.500" />
          <path d="M.5 6h23v18H.5z" fill="#eee" />
          <path d="M8 11h4v4H8z" fill="#f25022" /><path d="M13 11h4v4h-4z" fill="#7fba00" />
          <path d="M8 16h4v4H8z" fill="#00a4ef" /><path d="M13 16h4v4h-4z" fill="#ffb900" />
        </App24>
        <App24>
          <path d="M0 8l12-7 12 7v4H0z" fill="#0c59a4" />
          <path d="M3 8h18v8H3z" fill="#f3f3f3" />
          <path d="M0 9l12 7 12-7v14H0z" fill="#2fb3ec" />
          <path d="M0 23l12-8 12 8z" fill="#1490df" />
        </App24>
        <App24>
          <path d="M0 0h24v24H0z" fill="#000" />
          <path d="M8 4h3v16H8zM13 4h3v16h-3z" fill="#b1060f" />
          <path d="M8 4h3l5 16h-3z" fill="#e50914" />
        </App24>
        <App24>
          <path d="M1 3h9v4H1z" fill="#e2a010" />
          <path d="M1 5h22v16H1z" fill="#fcd462" />
          <path d="M5 14h14v8h-4v-4H9v4H5z" fill="#3c94d8" />
        </App24>
        <App24>
          <path d="M0 1l7 2 1 8 4 2 4-2 1-8 7-2c0 8-4 10-8 13l-2 8h-4l-2-8C4 11 0 9 0 1z" fill="#15181a" />
          <path d="M9.500 2h5v8l-2.500 2-2.500-2z" fill="#15181a" />
        </App24>
        <App24 open>
          <circle cx="12" cy="12" r="11" fill="#fdd04a" />
          <path d="M2.500 6.500A11 11 0 0121.500 6.500L22 8H12l-5 6z" fill="#db4437" />
          <path d="M2.500 6.500L8 15l3 2-1.500 6A11 11 0 012.500 6.500z" fill="#0f9d58" />
          <circle cx="12" cy="12" r="5" fill="#fff" />
          <circle cx="12" cy="12" r="4" fill="#4285f4" />
        </App24>
        <App24 open>
          <path d="M12 0c-1 2 0 3 1 3.500 10 2 11 14 1 17-2 .5-3 2-3 3.500-1-1-2-2.500-2-4C1 17 0 6 10 4c0-2 1-3 2-4z" fill="#e75b2b" />
          <circle cx="12" cy="12" r="3.300" fill="#3a2218" />
        </App24>
        <App24 open>
          <circle cx="12" cy="12" r="11.500" fill="#6b2f91" stroke="#ddd" />
          <path d="M6 6l3 2h6l3-2 1 5c1 9-15 9-14 0z" fill="#fff" />
        </App24>
        <App24 open active>
          <path d="M6 1h18v7H6z" fill="#21a366" /><path d="M15 1h9v6h-9z" fill="#33c481" />
          <path d="M6 7h9v6H6z" fill="#107c41" /><path d="M15 7h9v5h-9z" fill="#21a366" />
          <path d="M6 12h18v10H6z" fill="#185c37" /><path d="M15 12h9v5h-9z" fill="#107c41" />
          <path d="M0 6h12v13H0z" fill="#107c41" />
          <path d="M3.500 9l5 7M8.500 9l-5 7" stroke="#fff" strokeWidth="1.800" />
        </App24>
        <App24 open>
          <path d="M11 4c8-1 13 5 10 11-3 8-12 9-14 5-1-3-2-4-5-4-3-5 1-11 9-12z" fill="#b9def0" />
          <circle cx="9" cy="9" r="2" fill="#66b64a" /><circle cx="14" cy="7.500" r="2" fill="#f2c230" />
          <circle cx="5" cy="13" r="2" fill="#e2463a" /><circle cx="10" cy="14" r="1.800" fill="#2b2520" />
          <path d="M15 23l4-17" stroke="#e69138" strokeWidth="2.500" />
          <path d="M18 7l1-5 4-2 1 3-3 4z" fill="#c58a56" />
        </App24>
      </div>
      <div className="ml-auto flex h-10 items-center text-xs leading-[18px]">
        <svg width="12" height="7" viewBox="0 0 12 7" fill="none" stroke="#fff" strokeWidth="1.400"><path d="M.5 6.500L6 1l5.500 5.500" /></svg>
        <svg className="ml-[10px]" width="16" height="10" viewBox="0 0 16 10">
          <path d="M3 10a3 3 0 010-6 5 5 0 019-1 4 4 0 011 7z" fill="#aaa" />
          <path d="M3 10a3 3 0 012-5c3 0 5 1 7 0 4-1 5 4 2 5z" fill="#fff" />
        </svg>
        <svg className="ml-[8px]" width="16" height="12" viewBox="0 0 16 12" fill="none" stroke="#fff" strokeWidth="1.100">
          <path d="M5 3.500h9v7H4V8M14.500 5.500v3M1 1v2M4 1v2M.5 3.500h4v2h-4zM2.500 5.500v3" />
          <path d="M7 5h5v4H6z" fill="#fff" />
        </svg>
        <svg className="ml-[8px]" width="16" height="12" viewBox="0 0 16 12" fill="none" stroke="#fff">
          <path d="M.5 4h2l3-3v10l-3-3h-2zM7.500 4c1 1 1 3 0 4M9.500 2.500c2 2 2 5 0 7" />
          <path d="M12 1c3 3 3 7 0 10" opacity=".5" />
        </svg>
        <T className="ml-[10px] w-[23px]">ENG</T>
        <div className="ml-[13px] flex w-[58px] flex-col items-center">
          <T className="w-[42px]">7:02 PM</T>
          <T className="w-[58px]">2020-10-03</T>
        </div>
        <div className="relative ml-[18px] h-[16px] w-[36px]">
          <svg width="16" height="16" viewBox="0 0 16 16">
            <path d="M0 0h16v13H9l-3 3v-3H0z" fill="#fff" />
            <path d="M3 3.500h10M3 6.500h10M3 9.500h6" stroke="#333" />
          </svg>
          <span className="absolute top-[6px] left-[6px] flex size-[19px] items-center justify-center rounded-full border border-[#888] bg-[#333] text-[10.500px] leading-none">
            25
          </span>
        </div>
        <div className="mr-1 h-10 w-px bg-[#777]" />
      </div>
    </div>
  );
}

export default function App() {
  return (
    <div className="h-[1080px] w-full overflow-hidden bg-white font-['Open_Sans','Noto_Sans',sans-serif]">
      <div className="h-[1080px] w-[1920px] overflow-hidden bg-[#e6e6e6]">
        <Header />
        <Ribbon />
        <FormulaBar />
        <Sheet />
        <SheetTabs />
        <StatusBar />
        <Taskbar />
      </div>
    </div>
  );
}
